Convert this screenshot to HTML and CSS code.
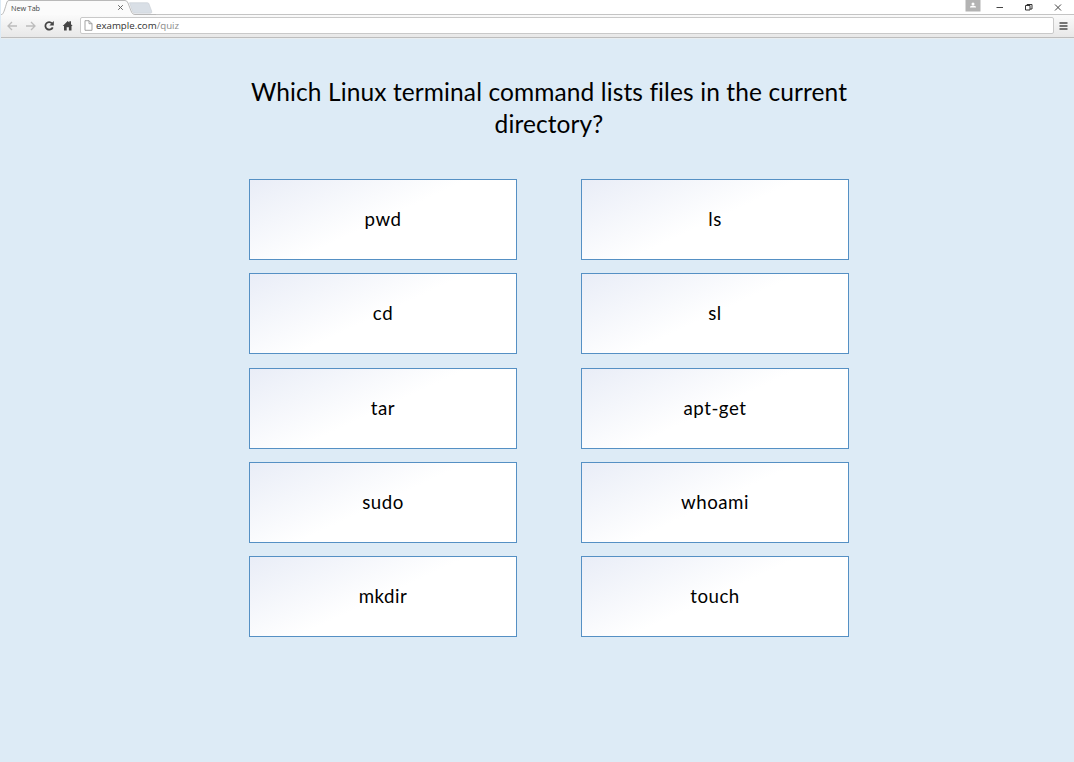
FILE: index.html
```html
<!DOCTYPE html>
<html lang="en">
<head>
<meta charset="utf-8">
<title>Quiz</title>
<link rel="stylesheet" href="styles.css">
</head>
<body>
<header class="browser">
  <div class="tabbar">
    <svg class="tabshape" width="155" height="15" viewBox="0 0 155 15">
      <path d="M128.500 2.700h18q1 0 1.400 1l2.800 7.500q.7 2-1.300 2h-15q-2 0-2.800-1.500z" fill="#d9dfe6" stroke="#c7cdd4" stroke-width=".6"/>
      <path d="M1 14.500C3 13 4 8 6 2Q6.500.5 8 .5H124Q126 .5 127 3L130.500 12Q131.500 14.500 134 14.500H155V15H1z" fill="#fbfbfb"/>
      <path d="M1 14.500C3 13 4 8 6 2Q6.500.5 8 .5H124Q126 .5 127 3L130.500 12Q131.500 14.500 134 14.500H155" fill="none" stroke="#b9b9b9"/>
    </svg>
    <div class="tab"><span class="tabname">New Tab</span>
      <svg width="7" height="7" viewBox="0 0 7 7"><path d="M1.200 1.200l4.600 4.600M5.800 1.200L1.200 5.800" stroke="#666"/></svg>
    </div>
    <div class="windowbuttons">
      <svg width="109" height="15" viewBox="0 0 109 15">
        <rect x=".5" width="15" height="11.500" fill="#b3b3b3"/><circle cx="8" cy="4" r="1.500" fill="#fff"/><path d="M5 7.500V7q0-1.200 3-1.200t3 1.200v.5z" fill="#fff"/>
        <path d="M31.500 7.500H38" stroke="#444"/>
        <path d="M60.500 5.500h4.500v4.500h-4.500zM62 5.300V4.500h5v4.500h-1.800" fill="none" stroke="#333"/>
        <path d="M90 4.500l6 6M96 4.500l-6 6" stroke="#444"/>
      </svg>
    </div>
  </div>
  <div class="toolbar">
    <svg class="nav" width="80" height="20" viewBox="0 0 80 20">
      <g fill="none" stroke="#bcbcbc" stroke-width="1.300"><path d="M17 11H8M12 7l-4 4 4 4M26 11h9M31 7l4 4-4 4"/></g>
      <path d="M52 8.300A3.800 3.800 0 1 0 52.700 12.300" fill="none" stroke="#444" stroke-width="1.800"/><path d="M53.800 6v4.400h-4.400z" fill="#444"/>
      <path d="M62.700 11l5-5 1.600 1.600V6.300H71v3l1.700 1.700h-1.200v4.500h-2.600v-3.300h-2.200v3.300H64V11z" fill="#444"/>
    </svg>
    <div class="address">
      <svg width="9" height="11" viewBox="0 0 9 11"><path d="M1 .7h4l3 3v6.600H1zM5 .7v3h3" fill="#fff" stroke="#999" stroke-width=".9"/></svg>
      <span class="url">example.com<span class="path">/quiz</span></span>
    </div>
    <svg class="menu" width="20" height="20" viewBox="0 0 20 20"><path d="M5.500 8h8M5.500 11h8M5.500 14h8" stroke="#4a4a4a" stroke-width="1.700"/></svg>
  </div>
</header>
<main class="quiz">
  <h1 class="question">Which Linux terminal command lists files in the current<br>directory?</h1>
  <div class="answers">
    <button class="answer">pwd</button><button class="answer">ls</button>
    <button class="answer">cd</button><button class="answer">sl</button>
    <button class="answer">tar</button><button class="answer">apt-get</button>
    <button class="answer">sudo</button><button class="answer">whoami</button>
    <button class="answer">mkdir</button><button class="answer">touch</button>
  </div>
</main>
</body>
</html>
```
FILE: styles.css
```css
* { box-sizing: border-box; }
body { margin: 0; height: 762px; overflow: hidden; background: #ddebf6; }
svg { display: block; flex: none; }
.browser { height: 39px; padding-left: 1px; font-family: "Open Sans", sans-serif; }
.tabbar { height: 15px; background: #fff; display: flex; position: relative; border-bottom: 1px solid #c4c4c4; }
.tabshape { position: absolute; left: 0; top: 0; }
.tab { position: relative; width: 124px; height: 15px; padding: 0 1px 0 10px; display: flex; align-items: center; justify-content: space-between; font-size: 7.3px; letter-spacing: -.1px; color: #444; }
.windowbuttons { margin-left: auto; }
.toolbar { height: 23px; display: flex; background: linear-gradient(#fafafa, #e8e8e8); border-bottom: 1px solid #bdbdbd; box-shadow: 0 1px #e8edf0; }
.nav { margin-left: -1px; }
.address { flex: 1; height: 17px; margin-top: 2px; border: 1px solid #c9c9c9; border-radius: 2px; background: #fff; display: flex; align-items: center; padding-left: 3px; gap: 3px; }
.url { font-size: 9.7px; line-height: 14px; color: #333; }
.path { color: #8c8c8c; }
.quiz { width: 600px; margin: 37px 0 0 249px; font-family: Lato, sans-serif; color: #000; }
.question { margin: 0; height: 103px; font-size: 24.5px; line-height: 32px; letter-spacing: .11px; font-weight: 400; text-align: center; white-space: nowrap; }
.answers { display: grid; grid-template-columns: 268px 268px; column-gap: 64px; row-gap: 13.3px; }
.answer { height: 81px; padding: 0 0 1px; border: 1px solid #5590c4; background: linear-gradient(155deg, #e9edf7 0%, #fff 50%); font: 400 18.7px/24px Lato, sans-serif; letter-spacing: .5px; color: #000; }
```
